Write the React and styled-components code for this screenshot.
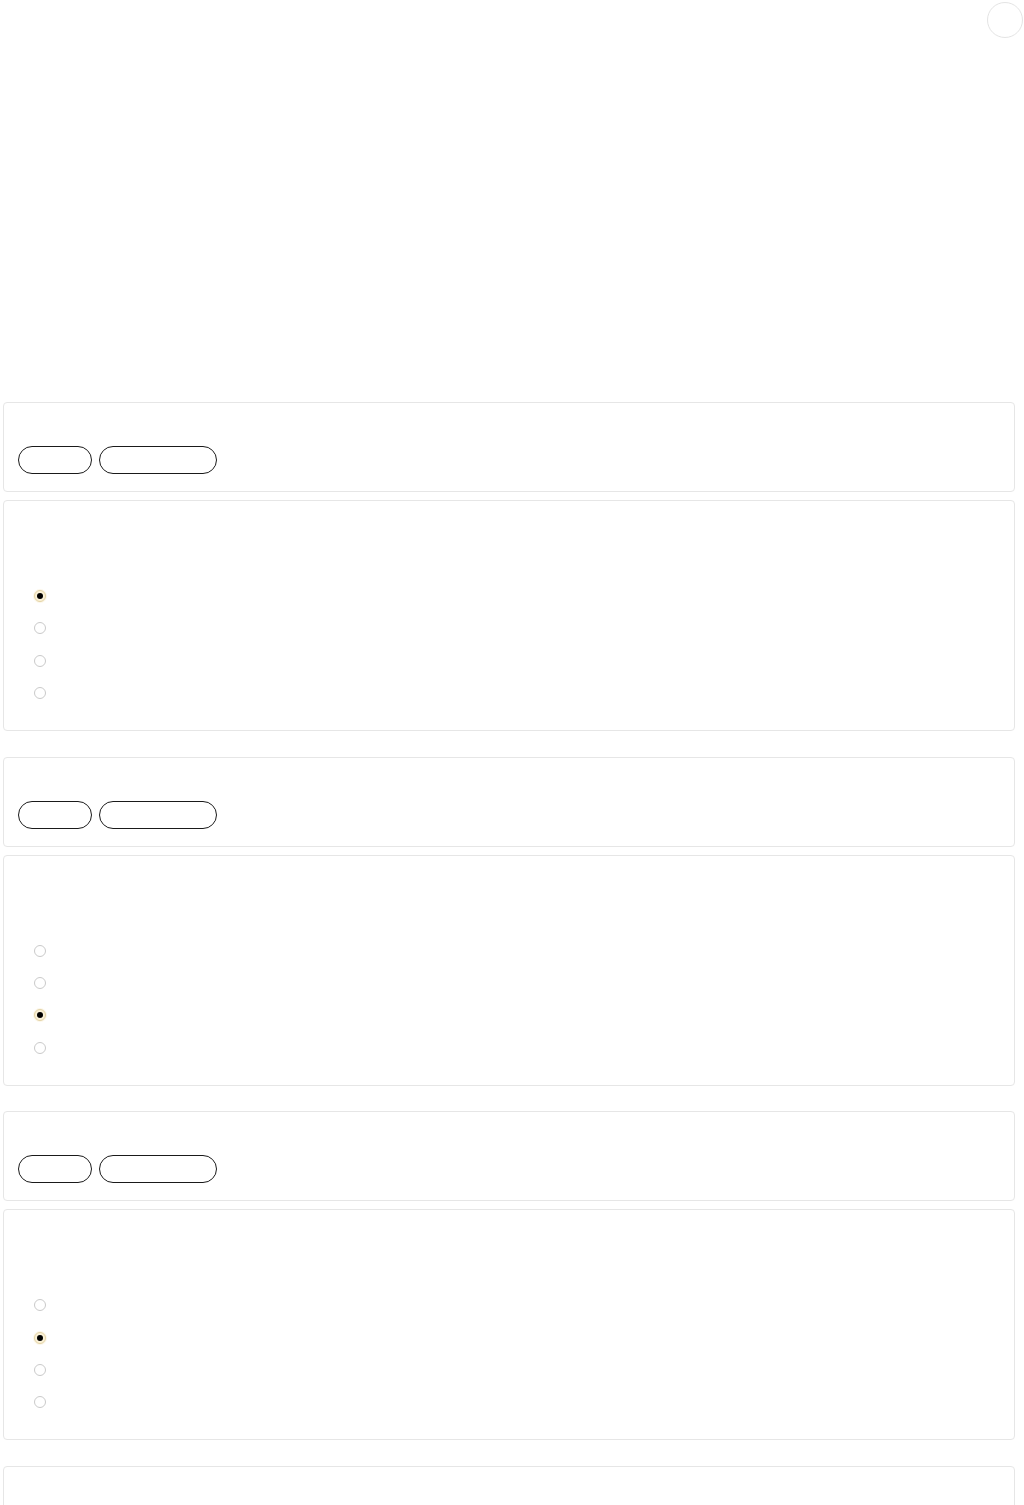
import React from "react";
import styled, { createGlobalStyle } from "styled-components";

const Global = createGlobalStyle`
  html, body { margin: 0; padding: 0; background: #ffffff; }
  body { font-family: "Liberation Sans", Arial, sans-serif; color: #222; }
`;

const Page = styled.div`
  width: 1024px;
  height: 1505px;
  display: flex;
  flex-direction: column;
  overflow: hidden;
`;

const TopBar = styled.div`
  height: 402px;
  flex-shrink: 0;
  display: flex;
  justify-content: flex-end;
  align-items: flex-start;
  padding: 2px 1px 0 0;
  box-sizing: border-box;
`;

const Avatar = styled.button`
  width: 36px;
  height: 36px;
  border-radius: 50%;
  border: 1px solid #e4e4e4;
  background: #fff;
  padding: 0;
`;

const List = styled.div`
  display: flex;
  flex-direction: column;
  padding: 0 9px 0 3px;
`;

const Section = styled.section`
  display: flex;
  flex-direction: column;
  gap: 8px;
  margin-bottom: 25.67px;
  flex-shrink: 0;
`;

const Card = styled.div`
  box-sizing: border-box;
  border: 1.5px solid #e6e6e6;
  border-radius: 4px;
  background: #fff;
  height: ${(p) => p.$h}px;
  flex-shrink: 0;
`;

const HeaderCard = styled(Card)`
  display: flex;
  align-items: flex-end;
  gap: 7px;
  padding: 0 0 17px 14px;
`;

const Pill = styled.button`
  box-sizing: border-box;
  width: ${(p) => p.$w}px;
  height: 28px;
  border: 1px solid #1a1a1a;
  border-radius: 14px;
  background: #fff;
  padding: 0;
`;

const QuestionCard = styled(Card)`
  display: flex;
  flex-direction: column;
  padding: 89px 0 0 30px;
  gap: 20.33px;
`;

const Option = styled.label`
  display: flex;
  align-items: center;
  height: 12px;
`;

const Radio = styled.input.attrs({ type: "radio" })`
  appearance: none;
  -webkit-appearance: none;
  margin: 0;
  width: 12px;
  height: 12px;
  border-radius: 50%;
  box-sizing: border-box;
  border: 1px solid #cacaca;
  background: #fff;
  display: grid;
  place-content: center;
  &:checked {
    border-color: #e3d3a6;
    background: #fbf2d8;
    box-shadow: 0 0 0 1px #fcf7ea;
  }
  &:checked::before {
    content: "";
    width: 6px;
    height: 6px;
    border-radius: 50%;
    background: #000;
  }
`;

const data = [0, 2, 1];

export default function App() {
  return (
    <Page>
      <Global />
      <TopBar>
        <Avatar aria-label="account" />
      </TopBar>
      <List>
        {data.map((sel, i) => (
          <Section key={i}>
            <HeaderCard $h={90}>
              <Pill $w={74} />
              <Pill $w={118} />
            </HeaderCard>
            <QuestionCard $h={231}>
              {[0, 1, 2, 3].map((o) => (
                <Option key={o}>
                  <Radio name={`q${i}`} defaultChecked={o === sel} />
                </Option>
              ))}
            </QuestionCard>
          </Section>
        ))}
        <Section>
          <HeaderCard $h={90} />
        </Section>
      </List>
    </Page>
  );
}
